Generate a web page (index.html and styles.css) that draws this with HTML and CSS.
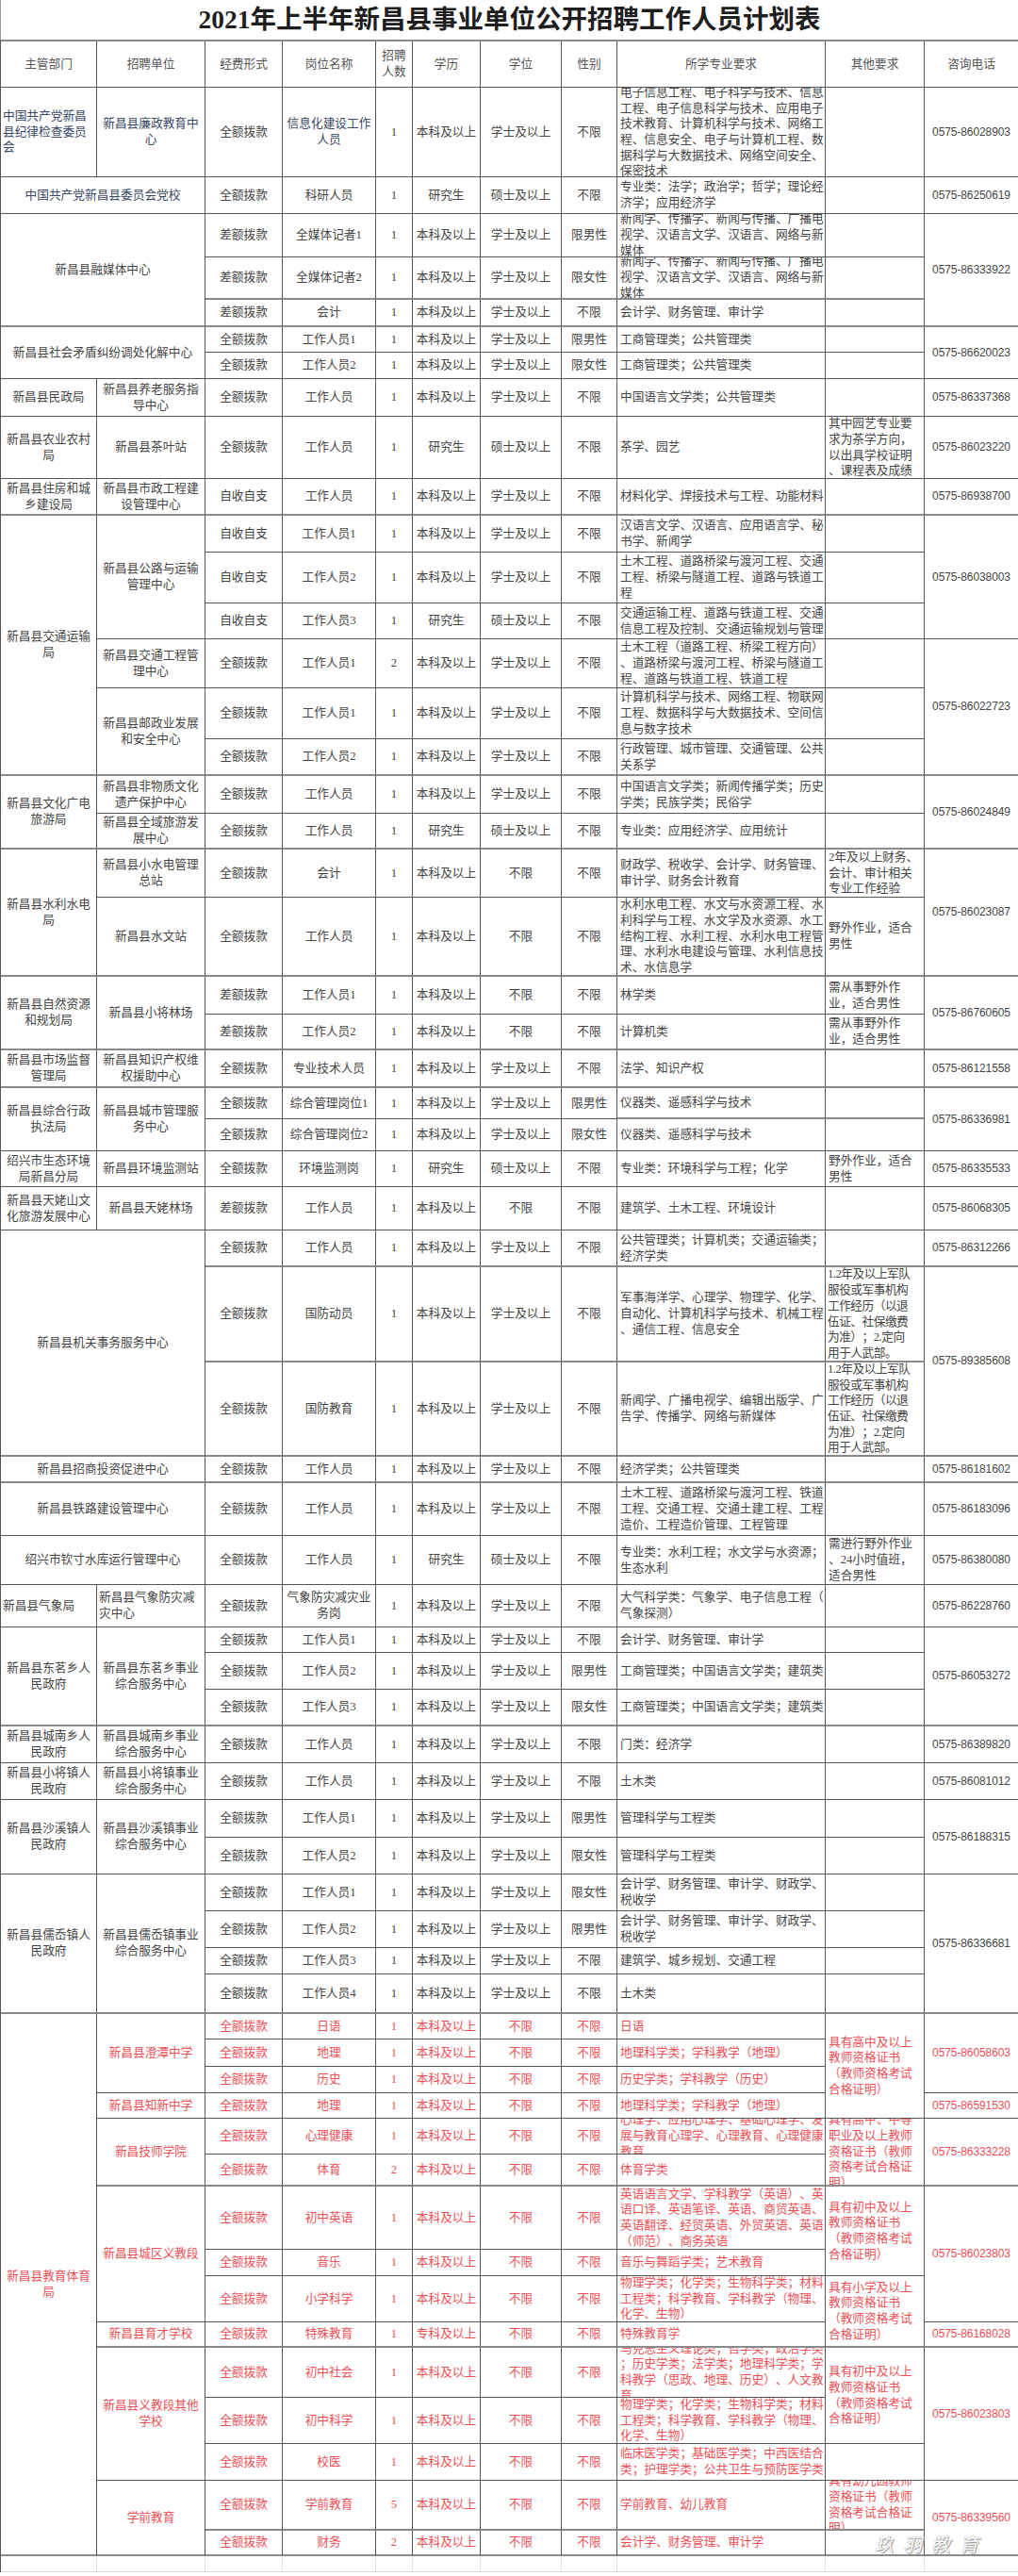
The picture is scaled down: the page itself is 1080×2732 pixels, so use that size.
FILE: index.html
```html
<!DOCTYPE html>
<html lang="zh-CN">
<head>
<meta charset="utf-8">
<title>2021年上半年新昌县事业单位公开招聘工作人员计划表</title>
<link rel="stylesheet" href="styles.css">
</head>
<body>
<div class="page">
<h1 class="title">2021年上半年新昌县事业单位公开招聘工作人员计划表</h1>
<div class="g">
<div class="tr hd">
<div>主管部门</div><div>招聘单位</div><div>经费形式</div><div>岗位名称</div><div>招聘人数</div><div>学历</div><div>学位</div><div>性别</div><div>所学专业要求</div><div>其他要求</div><div>咨询电话</div>
</div>

<div class="tr">
<div class="l bl">中国共产党新昌县纪律检查委员会</div><div class="bl">新昌县廉政教育中心</div><div>全额拨款</div><div class="bl">信息化建设工作人员</div><div>1</div><div>本科及以上</div><div>学士及以上</div><div>不限</div><div class="m">电子信息工程、电子科学与技术、信息工程、电子信息科学与技术、应用电子技术教育、计算机科学与技术、网络工程、信息安全、电子与计算机工程、数据科学与大数据技术、网络空间安全、保密技术</div><div class="o"></div><div class="ph">0575-86028903</div>
</div>

<div class="tr">
<div class="cs2 bl">中国共产党新昌县委员会党校</div><div>全额拨款</div><div>科研人员</div><div>1</div><div>研究生</div><div>硕士及以上</div><div>不限</div><div class="m">专业类：法学；政治学；哲学；理论经济学；应用经济学</div><div class="o"></div><div class="ph">0575-86250619</div>
</div>

<div class="tr">
<div class="cs2 rs3 tk">新昌县融媒体中心</div><div>差额拨款</div><div>全媒体记者1</div><div>1</div><div>本科及以上</div><div>学士及以上</div><div>限男性</div><div class="m">新闻学、传播学、新闻与传播、广播电视学、汉语言文学、汉语言、网络与新媒体</div><div class="o"></div><div class="ph rs3 tk">0575-86333922</div>
</div>
<div class="tr tb">
<div>差额拨款</div><div>全媒体记者2</div><div>1</div><div>本科及以上</div><div>学士及以上</div><div>限女性</div><div class="m">新闻学、传播学、新闻与传播、广播电视学、汉语言文学、汉语言、网络与新媒体</div><div class="o"></div>
</div>
<div class="tr tb">
<div>差额拨款</div><div>会计</div><div>1</div><div>本科及以上</div><div>学士及以上</div><div>不限</div><div class="m">会计学、财务管理、审计学</div><div class="o"></div>
</div>

<div class="tr">
<div class="cs2 rs2">新昌县社会矛盾纠纷调处化解中心</div><div>全额拨款</div><div>工作人员1</div><div>1</div><div>本科及以上</div><div>学士及以上</div><div>限男性</div><div class="m">工商管理类；公共管理类</div><div class="o"></div><div class="ph rs2">0575-86620023</div>
</div>
<div class="tr">
<div>全额拨款</div><div>工作人员2</div><div>1</div><div>本科及以上</div><div>学士及以上</div><div>限女性</div><div class="m">工商管理类；公共管理类</div><div class="o"></div>
</div>

<div class="tr">
<div>新昌县民政局</div><div>新昌县养老服务指导中心</div><div>全额拨款</div><div>工作人员</div><div>1</div><div>本科及以上</div><div>学士及以上</div><div>不限</div><div class="m">中国语言文学类；公共管理类</div><div class="o"></div><div class="ph">0575-86337368</div>
</div>

<div class="tr">
<div>新昌县农业农村局</div><div>新昌县茶叶站</div><div>全额拨款</div><div>工作人员</div><div>1</div><div>研究生</div><div>硕士及以上</div><div>不限</div><div class="m">茶学、园艺</div><div class="o nw">其中园艺专业要<br>求为茶学方向，<br>以出具学校证明<br>、课程表及成绩</div><div class="ph">0575-86023220</div>
</div>

<div class="tr tb">
<div>新昌县住房和城乡建设局</div><div>新昌县市政工程建设管理中心</div><div>自收自支</div><div>工作人员</div><div>1</div><div>本科及以上</div><div>学士及以上</div><div>不限</div><div class="m">材料化学、焊接技术与工程、功能材料</div><div class="o"></div><div class="ph">0575-86938700</div>
</div>

<div class="tr">
<div class="rs6 tk">新昌县交通运输局</div><div class="rs3">新昌县公路与运输管理中心</div><div>自收自支</div><div>工作人员1</div><div>1</div><div>本科及以上</div><div>学士及以上</div><div>不限</div><div class="m">汉语言文学、汉语言、应用语言学、秘书学、新闻学</div><div class="o"></div><div class="ph rs3">0575-86038003</div>
</div>
<div class="tr">
<div>自收自支</div><div>工作人员2</div><div>1</div><div>本科及以上</div><div>学士及以上</div><div>不限</div><div class="m">土木工程、道路桥梁与渡河工程、交通工程、桥梁与隧道工程、道路与铁道工程</div><div class="o"></div>
</div>
<div class="tr">
<div>自收自支</div><div>工作人员3</div><div>1</div><div>研究生</div><div>硕士及以上</div><div>不限</div><div class="m">交通运输工程、道路与铁道工程、交通信息工程及控制、交通运输规划与管理</div><div class="o"></div>
</div>
<div class="tr">
<div>新昌县交通工程管理中心</div><div>全额拨款</div><div>工作人员1</div><div>2</div><div>本科及以上</div><div>学士及以上</div><div>不限</div><div class="m">土木工程（道路工程、桥梁工程方向）、道路桥梁与渡河工程、桥梁与隧道工程、道路与铁道工程、铁道工程</div><div class="o"></div><div class="ph rs3 tk">0575-86022723</div>
</div>
<div class="tr">
<div class="rs2 tk">新昌县邮政业发展和安全中心</div><div>全额拨款</div><div>工作人员1</div><div>1</div><div>本科及以上</div><div>学士及以上</div><div>不限</div><div class="m">计算机科学与技术、网络工程、物联网工程、数据科学与大数据技术、空间信息与数字技术</div><div class="o"></div>
</div>
<div class="tr tb">
<div>全额拨款</div><div>工作人员2</div><div>1</div><div>本科及以上</div><div>学士及以上</div><div>不限</div><div class="m">行政管理、城市管理、交通管理、公共关系学</div><div class="o"></div>
</div>

<div class="tr">
<div class="rs2 tk">新昌县文化广电旅游局</div><div>新昌县非物质文化遗产保护中心</div><div>全额拨款</div><div>工作人员</div><div>1</div><div>本科及以上</div><div>学士及以上</div><div>不限</div><div class="m">中国语言文学类；新闻传播学类；历史学类；民族学类；民俗学</div><div class="o"></div><div class="ph rs2 tk">0575-86024849</div>
</div>
<div class="tr tb">
<div>新昌县全域旅游发展中心</div><div>全额拨款</div><div>工作人员</div><div>1</div><div>研究生</div><div>硕士及以上</div><div>不限</div><div class="m">专业类：应用经济学、应用统计</div><div class="o"></div>
</div>

<div class="tr">
<div class="rs2 tk">新昌县水利水电局</div><div>新昌县小水电管理总站</div><div>全额拨款</div><div>会计</div><div>1</div><div>本科及以上</div><div>不限</div><div>不限</div><div class="m">财政学、税收学、会计学、财务管理、审计学、财务会计教育</div><div class="o nw">2年及以上财务、<br>会计、审计相关<br>专业工作经验</div><div class="ph rs2 tk">0575-86023087</div>
</div>
<div class="tr tb">
<div>新昌县水文站</div><div>全额拨款</div><div>工作人员</div><div>1</div><div>本科及以上</div><div>不限</div><div>不限</div><div class="m">水利水电工程、水文与水资源工程、水利科学与工程、水文学及水资源、水工结构工程、水利工程、水利水电工程管理、水利水电建设与管理、水利信息技术、水信息学</div><div class="o nw">野外作业，适合<br>男性</div>
</div>

<div class="tr">
<div class="rs2 tk">新昌县自然资源和规划局</div><div class="rs2 tk">新昌县小将林场</div><div>差额拨款</div><div>工作人员1</div><div>1</div><div>本科及以上</div><div>不限</div><div>不限</div><div class="m">林学类</div><div class="o nw">需从事野外作<br>业，适合男性</div><div class="ph rs2 tk">0575-86760605</div>
</div>
<div class="tr tb">
<div>差额拨款</div><div>工作人员2</div><div>1</div><div>本科及以上</div><div>不限</div><div>不限</div><div class="m">计算机类</div><div class="o nw">需从事野外作<br>业，适合男性</div>
</div>

<div class="tr tb">
<div>新昌县市场监督管理局</div><div>新昌县知识产权维权援助中心</div><div>全额拨款</div><div>专业技术人员</div><div>1</div><div>本科及以上</div><div>学士及以上</div><div>不限</div><div class="m">法学、知识产权</div><div class="o"></div><div class="ph">0575-86121558</div>
</div>

<div class="tr">
<div class="rs2">新昌县综合行政执法局</div><div class="rs2">新昌县城市管理服务中心</div><div>全额拨款</div><div>综合管理岗位1</div><div>1</div><div>本科及以上</div><div>学士及以上</div><div>限男性</div><div class="m tk">仪器类、遥感科学与技术</div><div class="o tk"></div><div class="ph rs2">0575-86336981</div>
</div>
<div class="tr">
<div>全额拨款</div><div>综合管理岗位2</div><div>1</div><div>本科及以上</div><div>学士及以上</div><div>限女性</div><div class="m">仪器类、遥感科学与技术</div><div class="o"></div>
</div>

<div class="tr">
<div>绍兴市生态环境局新昌分局</div><div>新昌县环境监测站</div><div>全额拨款</div><div>环境监测岗</div><div>1</div><div>研究生</div><div>硕士及以上</div><div>不限</div><div class="m">专业类：环境科学与工程；化学</div><div class="o nw">野外作业，适合<br>男性</div><div class="ph">0575-86335533</div>
</div>

<div class="tr">
<div>新昌县天姥山文化旅游发展中心</div><div>新昌县天姥林场</div><div>差额拨款</div><div>工作人员</div><div>1</div><div>本科及以上</div><div>不限</div><div>不限</div><div class="m">建筑学、土木工程、环境设计</div><div class="o"></div><div class="ph">0575-86068305</div>
</div>

<div class="tr tb">
<div class="cs2 rs3">新昌县机关事务服务中心</div><div>全额拨款</div><div>工作人员</div><div>1</div><div>本科及以上</div><div>学士及以上</div><div>不限</div><div class="m">公共管理类；计算机类；交通运输类；经济学类</div><div class="o"></div><div class="ph">0575-86312266</div>
</div>
<div class="tr tb">
<div>全额拨款</div><div>国防动员</div><div>1</div><div>本科及以上</div><div>学士及以上</div><div>不限</div><div class="m">军事海洋学、心理学、物理学、化学、自动化、计算机科学与技术、机械工程、通信工程、信息安全</div><div class="o nw sq">1.2年及以上军队<br>服役或军事机构<br>工作经历（以退<br>伍证、社保缴费<br>为准）；2.定向<br>用于人武部。</div><div class="ph rs2">0575-89385608</div>
</div>
<div class="tr tb">
<div>全额拨款</div><div>国防教育</div><div>1</div><div>本科及以上</div><div>学士及以上</div><div>不限</div><div class="m">新闻学、广播电视学、编辑出版学、广告学、传播学、网络与新媒体</div><div class="o nw sq">1.2年及以上军队<br>服役或军事机构<br>工作经历（以退<br>伍证、社保缴费<br>为准）；2.定向<br>用于人武部。</div>
</div>

<div class="tr tb">
<div class="cs2">新昌县招商投资促进中心</div><div>全额拨款</div><div>工作人员</div><div>1</div><div>本科及以上</div><div>学士及以上</div><div>不限</div><div class="m">经济学类；公共管理类</div><div class="o"></div><div class="ph">0575-86181602</div>
</div>
<div class="tr">
<div class="cs2">新昌县铁路建设管理中心</div><div>全额拨款</div><div>工作人员</div><div>1</div><div>本科及以上</div><div>学士及以上</div><div>不限</div><div class="m">土木工程、道路桥梁与渡河工程、铁道工程、交通工程、交通土建工程、工程造价、工程造价管理、工程管理</div><div class="o"></div><div class="ph">0575-86183096</div>
</div>
<div class="tr">
<div class="cs2">绍兴市钦寸水库运行管理中心</div><div>全额拨款</div><div>工作人员</div><div>1</div><div>研究生</div><div>硕士及以上</div><div>不限</div><div class="m">专业类：水利工程；水文学与水资源；生态水利</div><div class="o nw">需进行野外作业<br>、24小时值班，<br>适合男性</div><div class="ph">0575-86380080</div>
</div>
<div class="tr">
<div class="l">新昌县气象局</div><div class="l">新昌县气象防灾减灾中心</div><div>全额拨款</div><div>气象防灾减灾业务岗</div><div>1</div><div>本科及以上</div><div>学士及以上</div><div>不限</div><div class="m">大气科学类：气象学、电子信息工程（气象探测）</div><div class="o"></div><div class="ph">0575-86228760</div>
</div>

<div class="tr">
<div class="rs3 tk">新昌县东茗乡人民政府</div><div class="rs3 tk">新昌县东茗乡事业综合服务中心</div><div>全额拨款</div><div>工作人员1</div><div>1</div><div>本科及以上</div><div>学士及以上</div><div>不限</div><div class="m">会计学、财务管理、审计学</div><div class="o"></div><div class="ph rs3 tk">0575-86053272</div>
</div>
<div class="tr">
<div>全额拨款</div><div>工作人员2</div><div>1</div><div>本科及以上</div><div>学士及以上</div><div>限男性</div><div class="m">工商管理类；中国语言文学类；建筑类</div><div class="o"></div>
</div>
<div class="tr tb">
<div>全额拨款</div><div>工作人员3</div><div>1</div><div>本科及以上</div><div>学士及以上</div><div>限女性</div><div class="m">工商管理类；中国语言文学类；建筑类</div><div class="o"></div>
</div>

<div class="tr">
<div>新昌县城南乡人民政府</div><div>新昌县城南乡事业综合服务中心</div><div>全额拨款</div><div>工作人员</div><div>1</div><div>本科及以上</div><div>学士及以上</div><div>不限</div><div class="m">门类：经济学</div><div class="o"></div><div class="ph">0575-86389820</div>
</div>
<div class="tr">
<div>新昌县小将镇人民政府</div><div>新昌县小将镇事业综合服务中心</div><div>全额拨款</div><div>工作人员</div><div>1</div><div>本科及以上</div><div>学士及以上</div><div>不限</div><div class="m">土木类</div><div class="o"></div><div class="ph">0575-86081012</div>
</div>
<div class="tr">
<div class="rs2">新昌县沙溪镇人民政府</div><div class="rs2">新昌县沙溪镇事业综合服务中心</div><div>全额拨款</div><div>工作人员1</div><div>1</div><div>本科及以上</div><div>学士及以上</div><div>限男性</div><div class="m">管理科学与工程类</div><div class="o"></div><div class="ph rs2">0575-86188315</div>
</div>
<div class="tr">
<div>全额拨款</div><div>工作人员2</div><div>1</div><div>本科及以上</div><div>学士及以上</div><div>限女性</div><div class="m">管理科学与工程类</div><div class="o"></div>
</div>
<div class="tr">
<div class="rs4 tk">新昌县儒岙镇人民政府</div><div class="rs4 tk">新昌县儒岙镇事业综合服务中心</div><div>全额拨款</div><div>工作人员1</div><div>1</div><div>本科及以上</div><div>学士及以上</div><div>限女性</div><div class="m">会计学、财务管理、审计学、财政学、税收学</div><div class="o"></div><div class="ph rs4 tk">0575-86336681</div>
</div>
<div class="tr">
<div>全额拨款</div><div>工作人员2</div><div>1</div><div>本科及以上</div><div>学士及以上</div><div>限男性</div><div class="m">会计学、财务管理、审计学、财政学、税收学</div><div class="o"></div>
</div>
<div class="tr">
<div>全额拨款</div><div>工作人员3</div><div>1</div><div>本科及以上</div><div>学士及以上</div><div>不限</div><div class="m">建筑学、城乡规划、交通工程</div><div class="o"></div>
</div>
<div class="tr tb">
<div>全额拨款</div><div>工作人员4</div><div>1</div><div>本科及以上</div><div>学士及以上</div><div>不限</div><div class="m">土木类</div><div class="o"></div>
</div>

<div class="tr red">
<div class="rs15 tk">新昌县教育体育局</div><div class="rs3">新昌县澄潭中学</div><div>全额拨款</div><div>日语</div><div>1</div><div>本科及以上</div><div>不限</div><div>不限</div><div class="m">日语</div><div class="o nw rs4">具有高中及以上<br>教师资格证书<br>（教师资格考试<br>合格证明）</div><div class="ph rs3">0575-86058603</div>
</div>
<div class="tr red">
<div>全额拨款</div><div>地理</div><div>1</div><div>本科及以上</div><div>不限</div><div>不限</div><div class="m">地理科学类；学科教学（地理）</div>
</div>
<div class="tr red">
<div>全额拨款</div><div>历史</div><div>1</div><div>本科及以上</div><div>不限</div><div>不限</div><div class="m">历史学类；学科教学（历史）</div>
</div>
<div class="tr red">
<div>新昌县知新中学</div><div>全额拨款</div><div>地理</div><div>1</div><div>本科及以上</div><div>不限</div><div>不限</div><div class="m">地理科学类；学科教学（地理）</div><div class="ph">0575-86591530</div>
</div>
<div class="tr red">
<div class="rs2 tk">新昌技师学院</div><div>全额拨款</div><div>心理健康</div><div>1</div><div>本科及以上</div><div>不限</div><div>不限</div><div class="m">心理学、应用心理学、基础心理学、发展与教育心理学、心理教育、心理健康教育</div><div class="o nw rs2 tk">具有高中、中等<br>职业及以上教师<br>资格证书（教师<br>资格考试合格证<br>明）</div><div class="ph rs2 tk">0575-86333228</div>
</div>
<div class="tr red tb">
<div>全额拨款</div><div>体育</div><div>2</div><div>本科及以上</div><div>不限</div><div>不限</div><div class="m">体育学类</div>
</div>
<div class="tr red">
<div class="rs3">新昌县城区义教段</div><div>全额拨款</div><div>初中英语</div><div>1</div><div>本科及以上</div><div>不限</div><div>不限</div><div class="m">英语语言文学、学科教学（英语）、英语口译、英语笔译、英语、商贸英语、英语翻译、经贸英语、外贸英语、英语（师范）、商务英语</div><div class="o nw rs2">具有初中及以上<br>教师资格证书<br>（教师资格考试<br>合格证明）</div><div class="ph rs3">0575-86023803</div>
</div>
<div class="tr red">
<div>全额拨款</div><div>音乐</div><div>1</div><div>本科及以上</div><div>不限</div><div>不限</div><div class="m">音乐与舞蹈学类；艺术教育</div>
</div>
<div class="tr red">
<div>全额拨款</div><div>小学科学</div><div>1</div><div>本科及以上</div><div>不限</div><div>不限</div><div class="m">物理学类；化学类；生物科学类；材料工程类；科学教育、学科教学（物理、化学、生物）</div><div class="o nw rs2 tk">具有小学及以上<br>教师资格证书<br>（教师资格考试<br>合格证明）</div>
</div>
<div class="tr red tb">
<div>新昌县育才学校</div><div>全额拨款</div><div>特殊教育</div><div>1</div><div>专科及以上</div><div>不限</div><div>不限</div><div class="m">特殊教育学</div><div class="ph">0575-86168028</div>
</div>
<div class="tr red">
<div class="rs3">新昌县义教段其他学校</div><div>全额拨款</div><div>初中社会</div><div>1</div><div>本科及以上</div><div>不限</div><div>不限</div><div class="m">马克思主义理论类；哲学类；政治学类；历史学类；法学类；地理科学类；学科教学（思政、地理、历史）、人文教育</div><div class="o nw rs2">具有初中及以上<br>教师资格证书<br>（教师资格考试<br>合格证明）</div><div class="ph rs3">0575-86023803</div>
</div>
<div class="tr red">
<div>全额拨款</div><div>初中科学</div><div>1</div><div>本科及以上</div><div>不限</div><div>不限</div><div class="m">物理学类；化学类；生物科学类；材料工程类；科学教育、学科教学（物理、化学、生物）</div>
</div>
<div class="tr red">
<div>全额拨款</div><div>校医</div><div>1</div><div>本科及以上</div><div>不限</div><div>不限</div><div class="m">临床医学类；基础医学类；中西医结合类；护理学类；公共卫生与预防医学类</div><div class="o"></div>
</div>
<div class="tr red tb">
<div class="rs2">学前教育</div><div>全额拨款</div><div>学前教育</div><div>5</div><div>本科及以上</div><div>不限</div><div>不限</div><div class="m">学前教育、幼儿教育</div><div class="o nw">具有幼儿园教师<br>资格证书（教师<br>资格考试合格证<br>明）</div><div class="ph rs2">0575-86339560</div>
</div>
<div class="tr red tb">
<div>全额拨款</div><div>财务</div><div>2</div><div>本科及以上</div><div>不限</div><div>不限</div><div class="m">会计学、财务管理、审计学</div><div class="o"></div>
</div>

<div class="tr blank">
<div></div><div></div><div></div><div></div><div></div><div></div><div></div><div></div><div></div><div></div><div></div>
</div>
</div>
<div class="wm">玖羽教育</div>
</div>
</body>
</html>
```

FILE: styles.css
```css
html, body {
  margin: 0;
  padding: 0;
  background: #ffffff;
}

.page {
  position: relative;
  width: 1080px;
  height: 2732px;
  overflow: hidden;
  font-family: "Liberation Serif", "Noto Sans CJK SC", serif;
  color: #454545;
}

.title {
  margin: 0;
  height: 42px;
  line-height: 42px;
  text-align: center;
  font-size: 27.5px;
  font-weight: 700;
  color: #1e1e1e;
  border-left: 1px solid #9a9a9a;
  box-sizing: border-box;
  font-family: "Liberation Serif", "Noto Sans CJK SC", serif;
}

.g {
  display: grid;
  grid-template-columns: 102px 115px 82px 99px 39px 72px 86px 59px 221px 105px 100px;
  grid-template-rows:
    49px
    95px 39px 46px 45px 29px 27px 28px 40px 66px 39px
    39px 54px 38px 52px 54px 39px 40px 38px 51px 84px
    40px 38px 40px 33px 34px 38px 46px 39px 101px 100px
    28px 56px 52px 45px 27px 39px 39px 39px 39px 40px
    39px 39px 39px 28px 42px 27px 29px 28px 27px 38px
    34px 67px 28px 49px 27px 53px 49px 39px 53px 27px
    17px;
  border-left: 1px solid #555555;
  border-top: 2px solid #8a8a8a;
  width: 1080px;
  box-sizing: border-box;
  font-size: 12.7px;
  line-height: 16.7px;
  text-spacing-trim: space-all;
}

.tr {
  display: contents;
}

.tr > div {
  box-sizing: border-box;
  border-right: 1px solid #555555;
  border-bottom: 1px solid #555555;
  display: flex;
  align-items: center;
  justify-content: center;
  text-align: center;
  padding: 0 1px;
  overflow: hidden;
  min-width: 0;
  min-height: 0;
  line-break: anywhere;
  word-break: break-all;
}

.tr.hd > div {
  color: #555555;
}

.tr.tb > div,
.tr > div.tk {
  border-bottom: 2px solid #8a8a8a;
}

.tr > div.l {
  justify-content: flex-start;
  text-align: left;
  padding-left: 2px;
}

.tr > div.m {
  justify-content: flex-start;
  text-align: left;
  padding: 0 0 0 3px;
}

.tr > div.o {
  justify-content: flex-start;
  text-align: left;
  padding: 0 1px 0 3px;
}

.tr > div.nw {
  white-space: nowrap;
}

.tr > div.sq {
  letter-spacing: -0.5px;
  padding-left: 2px;
}

.tr > div.ph {
  font-family: "Liberation Sans", "Noto Sans", sans-serif;
  font-size: 12px;
  letter-spacing: -0.1px;
}

.tr > div.bl {
  color: #3a4766;
}

.tr.red > div {
  color: #ee4f55;
}

.tr.blank > div {
  border-right-color: #e4e4e4;
  border-bottom-color: #d8d8d8;
}

.cs2 { grid-column: span 2; }
.rs2 { grid-row: span 2; }
.rs3 { grid-row: span 3; }
.rs4 { grid-row: span 4; }
.rs6 { grid-row: span 6; }
.rs15 { grid-row: span 15; }

.wm {
  position: absolute;
  left: 928px;
  top: 2683px;
  font-family: "Noto Sans CJK SC", sans-serif;
  font-size: 20px;
  font-style: italic;
  letter-spacing: 10px;
  color: #ffffff;
  text-shadow: 0 0 1px #777777, 1px 1px 1px #9a9a9a;
}
```
